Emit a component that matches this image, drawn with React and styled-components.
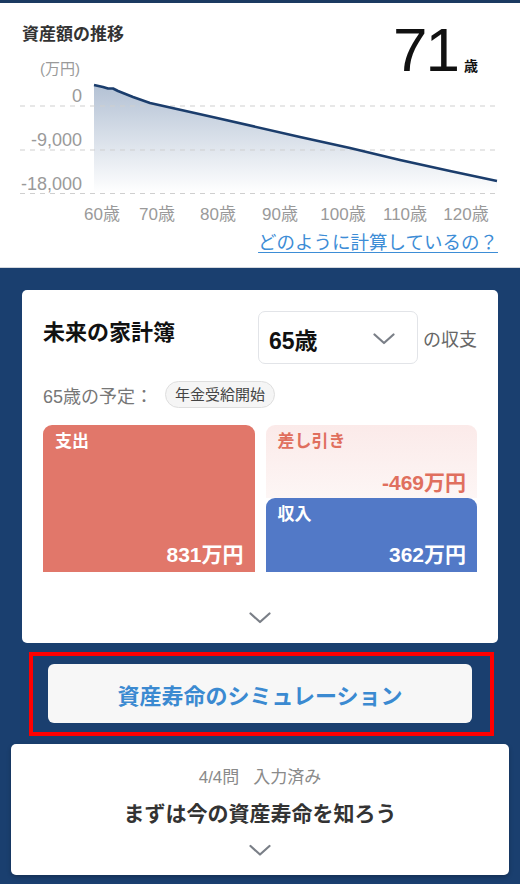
import styled, { createGlobalStyle } from 'styled-components';

const GlobalStyle = createGlobalStyle`
  body {
    margin: 0;
    background: #1a3f6f;
    font-family: "Liberation Sans", "Noto Sans CJK JP", sans-serif;
  }
`;

const curve = [
  [94, 85], [103, 87], [108, 88.5], [113, 88.5], [118, 91], [133, 97],
  [150, 103], [217, 118], [300, 137], [350, 148], [400, 160], [450, 171], [497, 181],
];

const yTicks = [
  { label: '0', y: 102, line: 106 },
  { label: '-9,000', y: 146, line: 150 },
  { label: '-18,000', y: 190, line: 193.5 },
];

const xTicks = [
  { label: '60歳', x: 102 },
  { label: '70歳', x: 157 },
  { label: '80歳', x: 218 },
  { label: '90歳', x: 280 },
  { label: '100歳', x: 343 },
  { label: '110歳', x: 405 },
  { label: '120歳', x: 466 },
];

const Chevron = ({ color = '#7a7f87', width = 22, height = 12 }) => (
  <svg width={width} height={height} viewBox="0 0 22 12">
    <path d="M1.5 1.5 L11 10 L20.5 1.5" fill="none" stroke={color} strokeWidth="2.2" strokeLinecap="round" strokeLinejoin="round" />
  </svg>
);

const AssetChart = () => {
  const line = curve.map(([x, y]) => `${x},${y}`).join(' ');
  const area = `M94,193 L${line.replace(/ /g, ' L')} L497,193 Z`;
  return (
    <ChartSvg width="520" height="148" viewBox="0 80 520 148">
      <defs>
        <linearGradient id="areaFill" x1="0" y1="85" x2="0" y2="193" gradientUnits="userSpaceOnUse">
          <stop offset="0" stopColor="#b3c1d4" />
          <stop offset="1" stopColor="#ffffff" />
        </linearGradient>
      </defs>
      <path d={area} fill="url(#areaFill)" />
      {yTicks.map((t) => (
        <g key={t.label}>
          <line x1="20" x2="497" y1={t.line} y2={t.line} stroke="#cfcfcf" strokeWidth="1" strokeDasharray="5 5" />
          <text x="82" y={t.y} textAnchor="end" fontSize="18" fill="#9a9a9a">{t.label}</text>
        </g>
      ))}
      <polyline points={line} fill="none" stroke="#1b3d6c" strokeWidth="2.6" strokeLinejoin="round" />
      {xTicks.map((t) => (
        <text key={t.label} x={t.x} y="220" textAnchor="middle" fontSize="17" fill="#9a9a9a">{t.label}</text>
      ))}
    </ChartSvg>
  );
};

const App = () => {
  return (
    <Page>
      <GlobalStyle />
      <TopSection>
        <Header>
          <HeaderLeft>
            <SectionTitle>資産額の推移</SectionTitle>
            <Unit>(万円)</Unit>
          </HeaderLeft>
          <Age>
            <AgeNumber>71</AgeNumber>
            <AgeUnit>歳</AgeUnit>
          </Age>
        </Header>
        <AssetChart />
        <LinkRow>
          <HelpLink href="#">どのように計算しているの？</HelpLink>
        </LinkRow>
      </TopSection>

      <NavyArea>
        <BudgetCard>
          <BudgetHeader>
            <BudgetTitle>未来の家計簿</BudgetTitle>
            <AgeSelect>
              <span>65歳</span>
              <Chevron />
            </AgeSelect>
            <BudgetSuffix>の収支</BudgetSuffix>
          </BudgetHeader>
          <PlanRow>
            <span>65歳の予定：</span>
            <Tag>年金受給開始</Tag>
          </PlanRow>
          <Bars>
            <Bar $bg="#e1776a" $height={147}>
              <BarLabel>支出</BarLabel>
              <BarAmount>831万円</BarAmount>
            </Bar>
            <BarColumn>
              <Bar $bg="linear-gradient(#fbeae9, #fdf6f5)" $color="#e06f5e" $height={73} $bottom={2}>
                <BarLabel>差し引き</BarLabel>
                <BarAmount>-469万円</BarAmount>
              </Bar>
              <Bar $bg="#5279c7" $height={74}>
                <BarLabel>収入</BarLabel>
                <BarAmount>362万円</BarAmount>
              </Bar>
            </BarColumn>
          </Bars>
          <ExpandRow $top={40}>
            <Chevron />
          </ExpandRow>
        </BudgetCard>

        <HighlightFrame>
          <SimButton>資産寿命のシミュレーション</SimButton>
        </HighlightFrame>

        <StepCard>
          <StepProgress>4/4問<Gap />入力済み</StepProgress>
          <StepTitle>まずは今の資産寿命を知ろう</StepTitle>
          <ExpandRow $top={16}>
            <Chevron height={13} />
          </ExpandRow>
        </StepCard>
      </NavyArea>
    </Page>
  );
};

const Page = styled.div`
  width: 520px;
  min-height: 884px;
  background: #1a3f6f;
`;

const TopSection = styled.section`
  background: #ffffff;
  border-top: 3px solid #1b3a61;
  border-bottom: 1px solid #d4d8de;
  padding-bottom: 12px;
`;

const Header = styled.div`
  display: flex;
  justify-content: space-between;
  align-items: flex-start;
  height: 77px;
  padding: 0 42px 0 22px;
`;

const HeaderLeft = styled.div`
  display: flex;
  flex-direction: column;
`;

const SectionTitle = styled.h2`
  margin: 22px 0 0;
  font-size: 17px;
  line-height: 20px;
  font-weight: bold;
  color: #333;
`;

const Unit = styled.span`
  margin: 14px 0 0 18px;
  font-size: 15px;
  line-height: 20px;
  color: #9a9a9a;
`;

const Age = styled.div`
  display: flex;
  align-items: baseline;
  margin-top: 16px;
  color: #111;
`;

const AgeNumber = styled.span`
  font-size: 62px;
  line-height: 62px;
  letter-spacing: -2px;
`;

const AgeUnit = styled.span`
  margin-left: 6px;
  font-size: 14px;
  font-weight: bold;
`;

const ChartSvg = styled.svg`
  display: block;
  font-family: "Liberation Sans", "Noto Sans CJK JP", sans-serif;
`;

const LinkRow = styled.div`
  display: flex;
  justify-content: flex-end;
  margin-top: 3px;
  padding-right: 22px;
`;

const HelpLink = styled.a`
  font-size: 18.5px;
  line-height: 24px;
  color: #3d8dd6;
  text-decoration: underline;
  text-underline-offset: 3px;
`;

const NavyArea = styled.main`
  padding: 22px 11px 10px;
`;

const BudgetCard = styled.div`
  margin: 0 11px;
  padding: 21px 21px 19px;
  background: #ffffff;
  border-radius: 5px;
`;

const BudgetHeader = styled.div`
  display: flex;
  align-items: flex-start;
`;

const BudgetTitle = styled.h3`
  flex: 1;
  margin: 7px 0 0;
  font-size: 22px;
  line-height: 30px;
  font-weight: bold;
  color: #111;
`;

const AgeSelect = styled.div`
  display: flex;
  align-items: center;
  justify-content: space-between;
  box-sizing: border-box;
  width: 160px;
  height: 53px;
  padding: 2px 22px 0 10px;
  border: 1px solid #e2e4e8;
  border-radius: 7px;
  font-size: 23px;
  font-weight: bold;
  color: #111;
`;

const BudgetSuffix = styled.span`
  align-self: center;
  margin-left: 5px;
  font-size: 18px;
  color: #666;
`;

const PlanRow = styled.div`
  display: flex;
  align-items: center;
  gap: 12px;
  margin-top: 17px;
  height: 27px;
  font-size: 18px;
  color: #777;
`;

const Tag = styled.span`
  padding: 3px 9px;
  border: 1px solid #dedede;
  border-radius: 14px;
  background: #f5f5f5;
  font-size: 15px;
  line-height: 19px;
  color: #444;
`;

const Bars = styled.div`
  display: grid;
  grid-template-columns: 1fr 1fr;
  gap: 11px;
  margin-top: 17px;
`;

const BarColumn = styled.div`
  display: flex;
  flex-direction: column;
`;

const Bar = styled.div`
  display: flex;
  flex-direction: column;
  justify-content: space-between;
  box-sizing: border-box;
  height: ${(p) => p.$height}px;
  padding: 6px 11px ${(p) => p.$bottom ?? 4}px 12px;
  background: ${(p) => p.$bg};
  color: ${(p) => p.$color || '#ffffff'};
  border-radius: 9px 9px 0 0;
`;

const BarLabel = styled.span`
  font-size: 17px;
  line-height: 22px;
  font-weight: bold;
`;

const BarAmount = styled.span`
  align-self: flex-end;
  font-size: 21px;
  line-height: 26px;
  font-weight: bold;
`;

const ExpandRow = styled.div`
  display: flex;
  justify-content: center;
  margin-top: ${(p) => p.$top}px;
  line-height: 0;
`;

const HighlightFrame = styled.div`
  margin: 9px 15px 0 18px;
  padding: 8px 18px 9px 15px;
  border: 4px solid #ff0000;
`;

const SimButton = styled.button`
  display: block;
  width: 100%;
  height: 59px;
  border: none;
  border-radius: 6px;
  background: #f7f7f7;
  font-family: "Liberation Sans", "Noto Sans CJK JP", sans-serif;
  font-size: 22px;
  font-weight: bold;
  color: #3b8ad1;
`;

const StepCard = styled.div`
  margin-top: 8px;
  padding: 22px 0 18px;
  background: #ffffff;
  border-radius: 5px;
  box-shadow: 0 2px 4px rgba(0, 0, 0, 0.25);
  text-align: center;
`;

const StepProgress = styled.div`
  font-size: 17px;
  line-height: 24px;
  color: #8a8a8a;
`;

const Gap = styled.span`
  display: inline-block;
  width: 14px;
`;

const StepTitle = styled.div`
  margin-top: 10px;
  font-size: 21px;
  line-height: 28px;
  font-weight: bold;
  color: #333;
`;

export default App;
